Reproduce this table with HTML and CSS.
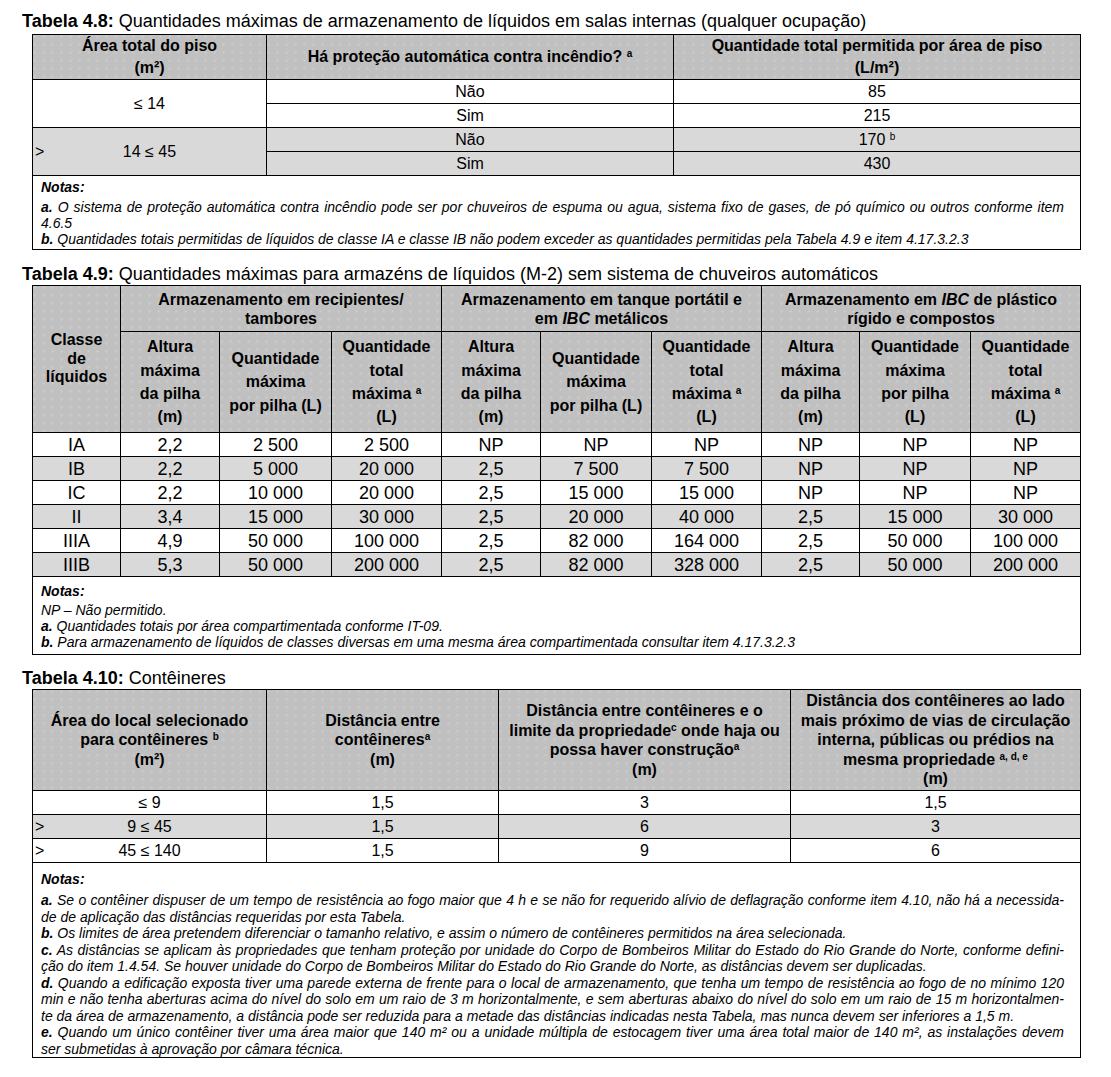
FILE: index.html
```html
<!DOCTYPE html>
<html lang="pt">
<head>
<meta charset="utf-8">
<title>Tabelas 4.8 a 4.10</title>
<link rel="stylesheet" href="styles.css">
</head>
<body>
<div class="page">

  <div class="caption caption-48"><b>Tabela 4.8:</b> Quantidades máximas de armazenamento de líquidos em salas internas (qualquer ocupação)</div>
  <table class="t t48">
    <colgroup><col class="c48a"><col class="c48b"><col class="c48c"></colgroup>
    <tr class="hd hd48">
      <th>Área total do piso<br>(m²)</th>
      <th>Há proteção automática contra incêndio? <sup>a</sup></th>
      <th>Quantidade total permitida por área de piso<br>(L/m²)</th>
    </tr>
    <tr class="r48">
      <td rowspan="2">≤ 14</td>
      <td>Não</td>
      <td>85</td>
    </tr>
    <tr class="r48">
      <td>Sim</td>
      <td>215</td>
    </tr>
    <tr class="r48 sh">
      <td rowspan="2"><div class="gt"><span class="gt-l">&gt;</span><span>14 ≤ 45</span><span></span></div></td>
      <td>Não</td>
      <td>170 <sup>b</sup></td>
    </tr>
    <tr class="r48 sh">
      <td>Sim</td>
      <td>430</td>
    </tr>
    <tr>
      <td colspan="3" class="notes notes48">
        <div class="notas">Notas:</div>
        <div class="ln j"><b>a.</b> O sistema de proteção automática contra incêndio pode ser por chuveiros de espuma ou agua, sistema fixo de gases, de pó químico ou outros conforme item</div>
        <div class="ln">4.6.5</div>
        <div class="ln"><b>b.</b> Quantidades totais permitidas de líquidos de classe IA e classe IB não podem exceder as quantidades permitidas pela Tabela 4.9 e item 4.17.3.2.3</div>
      </td>
    </tr>
  </table>

  <div class="caption caption-49"><b>Tabela 4.9:</b> Quantidades máximas para armazéns de líquidos (M-2) sem sistema de chuveiros automáticos</div>
  <table class="t t49">
    <colgroup>
      <col class="w88"><col class="w99"><col class="w112"><col class="w110"><col class="w99"><col class="w111"><col class="w110"><col class="w98"><col class="w111"><col class="w110">
    </colgroup>
    <tr class="hd hd49a">
      <th rowspan="2" class="cls">Classe<br>de<br>líquidos</th>
      <th colspan="3">Armazenamento em recipientes/<br>tambores</th>
      <th colspan="3">Armazenamento em tanque portátil e<br>em <i>IBC</i> metálicos</th>
      <th colspan="3">Armazenamento em <i>IBC</i> de plástico<br>rígido e compostos</th>
    </tr>
    <tr class="hd hd49b">
      <th>Altura<br>máxima<br>da pilha<br>(m)</th>
      <th>Quantidade<br>máxima<br>por pilha (L)</th>
      <th>Quantidade<br>total<br>máxima <sup>a</sup><br>(L)</th>
      <th>Altura<br>máxima<br>da pilha<br>(m)</th>
      <th>Quantidade<br>máxima<br>por pilha (L)</th>
      <th>Quantidade<br>total<br>máxima <sup>a</sup><br>(L)</th>
      <th>Altura<br>máxima<br>da pilha<br>(m)</th>
      <th>Quantidade<br>máxima<br>por pilha<br>(L)</th>
      <th>Quantidade<br>total<br>máxima <sup>a</sup><br>(L)</th>
    </tr>
    <tr class="r49"><td>IA</td><td>2,2</td><td>2 500</td><td>2 500</td><td>NP</td><td>NP</td><td>NP</td><td>NP</td><td>NP</td><td>NP</td></tr>
    <tr class="r49 sh"><td>IB</td><td>2,2</td><td>5 000</td><td>20 000</td><td>2,5</td><td>7 500</td><td>7 500</td><td>NP</td><td>NP</td><td>NP</td></tr>
    <tr class="r49"><td>IC</td><td>2,2</td><td>10 000</td><td>20 000</td><td>2,5</td><td>15 000</td><td>15 000</td><td>NP</td><td>NP</td><td>NP</td></tr>
    <tr class="r49 sh"><td>II</td><td>3,4</td><td>15 000</td><td>30 000</td><td>2,5</td><td>20 000</td><td>40 000</td><td>2,5</td><td>15 000</td><td>30 000</td></tr>
    <tr class="r49"><td>IIIA</td><td>4,9</td><td>50 000</td><td>100 000</td><td>2,5</td><td>82 000</td><td>164 000</td><td>2,5</td><td>50 000</td><td>100 000</td></tr>
    <tr class="r49 sh"><td>IIIB</td><td>5,3</td><td>50 000</td><td>200 000</td><td>2,5</td><td>82 000</td><td>328 000</td><td>2,5</td><td>50 000</td><td>200 000</td></tr>
    <tr>
      <td colspan="10" class="notes notes49">
        <div class="notas">Notas:</div>
        <div class="ln">NP – Não permitido.</div>
        <div class="ln"><b>a.</b> Quantidades totais por área compartimentada conforme IT-09.</div>
        <div class="ln"><b>b.</b> Para armazenamento de líquidos de classes diversas em uma mesma área compartimentada consultar item 4.17.3.2.3</div>
      </td>
    </tr>
  </table>

  <div class="caption caption-410"><b>Tabela 4.10:</b> Contêineres</div>
  <table class="t t410">
    <colgroup><col class="w234"><col class="w232"><col class="w292"><col class="w290"></colgroup>
    <tr class="hd hd410">
      <th>Área do local selecionado<br>para contêineres <sup>b</sup><br>(m²)</th>
      <th>Distância entre<br>contêineres<sup>a</sup><br>(m)</th>
      <th>Distância entre contêineres e o<br>limite da propriedade<sup>c</sup> onde haja ou<br>possa haver construção<sup>a</sup><br>(m)</th>
      <th>Distância dos contêineres ao lado<br>mais próximo de vias de circulação<br>interna, públicas ou prédios na<br>mesma propriedade <sup>a, d, e</sup><br>(m)</th>
    </tr>
    <tr class="r410"><td>≤ 9</td><td>1,5</td><td>3</td><td>1,5</td></tr>
    <tr class="r410 sh"><td><div class="gt"><span class="gt-l">&gt;</span><span>9 ≤ 45</span><span></span></div></td><td>1,5</td><td>6</td><td>3</td></tr>
    <tr class="r410"><td><div class="gt"><span class="gt-l">&gt;</span><span>45 ≤ 140</span><span></span></div></td><td>1,5</td><td>9</td><td>6</td></tr>
    <tr>
      <td colspan="4" class="notes notes410">
        <div class="notas">Notas:</div>
        <div class="ln j"><b>a.</b> Se o contêiner dispuser de um tempo de resistência ao fogo maior que 4 h e se não for requerido alívio de deflagração conforme item 4.10, não há a necessida-</div>
        <div class="ln">de de aplicação das distâncias requeridas por esta Tabela.</div>
        <div class="ln"><b>b.</b> Os limites de área pretendem diferenciar o tamanho relativo, e assim o número de contêineres permitidos na área selecionada.</div>
        <div class="ln j"><b>c.</b> As distâncias se aplicam às propriedades que tenham proteção por unidade do Corpo de Bombeiros Militar do Estado do Rio Grande do Norte, conforme defini-</div>
        <div class="ln">ção do item 1.4.54. Se houver unidade do Corpo de Bombeiros Militar do Estado do Rio Grande do Norte, as distâncias devem ser duplicadas.</div>
        <div class="ln j"><b>d.</b> Quando a edificação exposta tiver uma parede externa de frente para o local de armazenamento, que tenha um tempo de resistência ao fogo de no mínimo 120</div>
        <div class="ln j">min e não tenha aberturas acima do nível do solo em um raio de 3 m horizontalmente, e sem aberturas abaixo do nível do solo em um raio de 15 m horizontalmen-</div>
        <div class="ln">te da área de armazenamento, a distância pode ser reduzida para a metade das distâncias indicadas nesta Tabela, mas nunca devem ser inferiores a 1,5 m.</div>
        <div class="ln j"><b>e.</b> Quando um único contêiner tiver uma área maior que 140 m² ou a unidade múltipla de estocagem tiver uma área total maior de 140 m², as instalações devem</div>
        <div class="ln">ser submetidas à aprovação por câmara técnica.</div>
      </td>
    </tr>
  </table>

</div>
</body>
</html>
```

FILE: styles.css
```css
html, body {
  margin: 0;
  padding: 0;
  background: #ffffff;
}

body {
  font-family: "Liberation Sans", Arial, sans-serif;
  color: #000000;
}

.page {
  padding: 11px 0 0 22px;
}

.caption {
  font-size: 18px;
  line-height: 20px;
  height: 20px;
  margin: 0 0 3px 0;
  white-space: nowrap;
}

.caption b {
  font-weight: bold;
}

.caption-49 {
  margin-top: 14px;
  margin-bottom: 1px;
}

.caption-410 {
  margin-top: 13px;
  margin-bottom: 1px;
}

.t {
  margin-left: 10px;
  width: 1048px;
  table-layout: fixed;
  border-collapse: collapse;
}

.t th,
.t td {
  border: 1px solid #000000;
  padding: 0;
  text-align: center;
  vertical-align: middle;
}

.t th {
  background-color: #c0c0c0;
  background-image: radial-gradient(circle at 1px 1px, rgba(230, 230, 230, 0.45) 0.6px, transparent 1.1px);
  background-size: 9px 8px;
  font-weight: bold;
  font-size: 16px;
}

.t sup {
  font-size: 10px;
  line-height: 0;
  vertical-align: 5px;
}

.sh td {
  background: #d9d9d9;
}

/* column widths */
.c48a { width: 234px; }
.c48b { width: 407px; }
.c48c { width: 407px; }
.w88 { width: 88px; }
.w98 { width: 98px; }
.w99 { width: 99px; }
.w110 { width: 110px; }
.w111 { width: 111px; }
.w112 { width: 112px; }
.w232 { width: 232px; }
.w234 { width: 234px; }
.w290 { width: 290px; }
.w292 { width: 292px; }

/* table 4.8 */
.hd48 th {
  height: 44px;
  line-height: 22px;
}

.r48 td {
  height: 23px;
  font-size: 16px;
  line-height: 18px;
}

/* table 4.9 */
.hd49a th {
  height: 45px;
  line-height: 19px;
}

.hd49a th.cls {
  line-height: 18.5px;
}

.hd49b th {
  height: 100px;
  line-height: 23.3px;
}

.r49 td {
  height: 23px;
  font-size: 18px;
  line-height: 20px;
}

/* table 4.10 */
.hd410 th {
  height: 100px;
  line-height: 19.5px;
}

.r410 td {
  height: 23px;
  font-size: 16px;
  line-height: 18px;
}

/* ">" marker cells */
.gt {
  display: grid;
  grid-template-columns: 1fr auto 1fr;
  align-items: center;
}

.gt-l {
  justify-self: start;
  padding-left: 2px;
}

/* notes */
.t td.notes {
  text-align: left;
  vertical-align: top;
  font-size: 14px;
  font-style: italic;
  padding: 3px 16px 2px 8px;
}

.notas {
  font-weight: bold;
  line-height: 17px;
  margin-bottom: 3px;
}

.ln {
  line-height: 16px;
}

.ln b {
  font-weight: bold;
}

.j {
  text-align: justify;
  text-align-last: justify;
}

.notes49 {
  padding-top: 6px !important;
  padding-bottom: 4px !important;
}

.notes49 .notas {
  margin-bottom: 2px;
}

.notes410 {
  padding-top: 8px !important;
  padding-bottom: 0 !important;
}

.notes410 .notas {
  margin-bottom: 4px;
}

.notes410 .ln {
  line-height: 16.5px;
}
```
